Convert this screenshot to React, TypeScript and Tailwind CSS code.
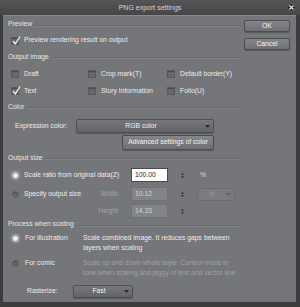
import React from 'react';

const font = { fontFamily: '"Liberation Sans", Arial, sans-serif' };

const Check = ({ checked = false }: { checked?: boolean }) => (
  <span className="relative w-[8px] h-[8px] shrink-0 bg-[#68696d] border border-[#58595d] shadow-[inset_0_1px_1px_rgba(0,0,0,0.3)]">
    {checked && (
      <svg className="absolute left-[-1px] top-[-3px]" width="11" height="11" viewBox="0 0 11 11">
        <path d="M2 6 L4.3 8.8 L9 1.5" stroke="#f4f4f4" strokeWidth="1.3" fill="none" />
      </svg>
    )}
  </span>
);

const Radio = ({ on = false }: { on?: boolean }) => (
  <span
    className={`w-[7px] h-[7px] shrink-0 rounded-full border ${
      on
        ? 'bg-[#f0f0f0] border-[#9a9b9f] shadow-[0_0_2px_1px_rgba(255,255,255,0.35)]'
        : 'bg-[#68696d] border-[#5c5d61] shadow-[inset_0_1px_1px_rgba(0,0,0,0.3)]'
    }`}
  />
);

const Header = ({ label }: { label: string }) => (
  <div className="flex items-center pl-[5px] pr-[4px] text-[#e6e6e6]">
    <span>{label}</span>
    <span className="flex-1 ml-[3px] mt-[3px] h-[2px] border-t border-[#67686c] border-b-[#828387] border-b" />
  </div>
);

const Arrow = ({ color = '#2e2e30' }: { color?: string }) => (
  <svg width="5" height="3" viewBox="0 0 5 3">
    <path d="M0 0 H5 L2.5 3 Z" fill={color} />
  </svg>
);

const Spinner = () => (
  <svg width="3" height="7" viewBox="0 0 3 7">
    <path d="M0 3 L1.5 0.5 L3 3 Z M0 4 L1.5 6.5 L3 4 Z" fill="#3c3c3e" />
  </svg>
);

const Dropdown = ({ label, w, disabled = false }: { label: string; w: string; disabled?: boolean }) => (
  <div
    className={`${w} h-full flex items-center rounded-[2px] border ${
      disabled
        ? 'border-[#6a6b6f] bg-[#7a7b7f] text-[#9c9da1]'
        : 'border-[#4f5054] bg-gradient-to-b from-[#77787c] to-[#636468] text-[#f0f0f0] shadow-[0_1px_1px_rgba(0,0,0,0.25)]'
    }`}
  >
    <span className="flex-1 text-center">{label}</span>
    <span className="pr-[3px] flex items-center">
      <Arrow color={disabled ? '#606165' : '#2a2a2c'} />
    </span>
  </div>
);

const Button = ({ label, className = '' }: { label: string; className?: string }) => (
  <div
    className={`flex items-center justify-center rounded-[2px] border border-[#4c4d51] bg-gradient-to-b from-[#85868a] to-[#6f7074] text-[#f2f2f2] shadow-[0_1px_1px_rgba(0,0,0,0.25)] ${className}`}
  >
    {label}
  </div>
);

const Field = ({ value, active = false }: { value: string; active?: boolean }) => (
  <div
    className={`w-[37px] h-[14px] flex items-center pl-[3px] border ${
      active ? 'bg-white border-[#4a4a4c] text-[#1e1e1e]' : 'bg-[#838488] border-[#707175] text-[#d2d3d6]'
    }`}
  >
    {value}
  </div>
);

export default function App() {
  return (
    <div className="w-[300px] h-[307px] bg-[#3c3c3e] flex flex-col text-[6.8px] leading-none" style={font}>
      {/* Title bar */}
      <div className="relative h-[15px] flex items-center justify-center bg-gradient-to-b from-[#555558] to-[#464649] text-[7px] text-[#d4d4d4]">
        PNG export settings
        <span className="absolute right-[4px] top-[3px] w-[9px] h-[9px] rounded-full bg-[#232325] border border-[#6a6a6c] flex items-center justify-center">
          <svg width="5" height="5" viewBox="0 0 5 5">
            <path d="M0.5 0.5 L4.5 4.5 M4.5 0.5 L0.5 4.5" stroke="#e8e8e8" strokeWidth="1.2" />
          </svg>
        </span>
      </div>

      <div className="flex flex-1 ml-[3px] mr-[4px] mb-[5px] bg-[#75767a] border-t border-[#88898d] text-[#ececec]">
        {/* Left column */}
        <div className="w-[241px] flex flex-col">
          <div className="h-[17px] flex items-center">
            <div className="w-full"><Header label="Preview" /></div>
          </div>
          <div className="h-[15px] flex items-center pl-[8px] gap-[5px]">
            <Check checked />
            <span>Preview rendering result on output</span>
          </div>

          <div className="h-[18px] flex items-center">
            <div className="w-full"><Header label="Output image" /></div>
          </div>
          <div className="h-[16px] flex items-center pl-[8px]">
            <div className="w-[77px] flex items-center gap-[5px]"><Check /><span>Draft</span></div>
            <div className="w-[79px] flex items-center gap-[5px]"><Check /><span>Crop mark(T)</span></div>
            <div className="flex items-center gap-[5px]"><Check /><span>Default border(Y)</span></div>
          </div>
          <div className="h-[18px] flex items-center pl-[8px]">
            <div className="w-[77px] flex items-center gap-[5px]"><Check checked /><span>Text</span></div>
            <div className="w-[79px] flex items-center gap-[5px]"><Check /><span>Story Information</span></div>
            <div className="flex items-center gap-[5px]"><Check /><span>Folio(U)</span></div>
          </div>

          <div className="h-[14px] flex items-center">
            <div className="w-full"><Header label="Color" /></div>
          </div>
          <div className="h-[20px] flex items-center pl-[12px] pt-[4px]">
            <span className="w-[61px]">Expression color:</span>
            <div className="h-[14px] flex">
              <Dropdown label="RGB color" w="w-[138px]" />
            </div>
          </div>
          <div className="h-[17px] flex items-center pl-[119px]">
            <Button label="Advanced settings of color" className="w-[92px] h-[15px]" />
          </div>

          <div className="h-[14px] flex items-center">
            <div className="w-full"><Header label="Output size" /></div>
          </div>
          <div className="h-[20px] flex items-center pl-[9px]">
            <div className="w-[119px] flex items-center gap-[5px]">
              <Radio on />
              <span>Scale ratio from original data(Z)</span>
            </div>
            <Field value="100.00" active />
            <div className="w-[29px] flex justify-center"><Spinner /></div>
            <span className="ml-[3px] text-[#dcdcdc]">%</span>
          </div>
          <div className="h-[18px] flex items-center pl-[9px]">
            <div className="w-[119px] flex items-center gap-[5px]">
              <Radio />
              <span>Specify output size</span>
              <span className="ml-auto mr-[13px] text-[#a3a4a8]">Width</span>
            </div>
            <Field value="10.12" />
            <div className="w-[29px] flex justify-center"><Spinner /></div>
            <div className="h-[13px] flex">
              <Dropdown label="in" w="w-[38px]" disabled />
            </div>
          </div>
          <div className="h-[16px] flex items-center pl-[9px]">
            <div className="w-[119px] flex items-center">
              <span className="ml-auto mr-[13px] text-[#a3a4a8]">Height</span>
            </div>
            <Field value="14.33" />
            <div className="w-[29px] flex justify-center"><Spinner /></div>
          </div>

          <div className="h-[11px] flex items-center">
            <div className="w-full"><Header label="Process when scaling" /></div>
          </div>
          <div className="h-[24px] flex pl-[9px] pt-[3px] leading-[10px]">
            <div className="w-[71px] h-[10px] flex items-center gap-[6px]">
              <Radio on />
              <span>For illustration</span>
            </div>
            <div>
              <div>Scale combined image. It reduces gaps between</div>
              <div>layers when scaling</div>
            </div>
          </div>
          <div className="h-[26px] flex pl-[9px] pt-[4px] leading-[10px]">
            <div className="w-[71px] h-[10px] flex items-center gap-[6px]">
              <Radio />
              <span>For comic</span>
            </div>
            <div className="text-[#a0a1a5]">
              <div>Scale up and down whole layer. Control moire in</div>
              <div>tone when scaling and jaggy of text and vector line.</div>
            </div>
          </div>
          <div className="flex-1 flex items-center pl-[24px]">
            <span className="w-[46px]">Rasterize:</span>
            <div className="h-[13px] flex">
              <Dropdown label="Fast" w="w-[60px]" />
            </div>
          </div>
        </div>

        {/* Right column */}
        <div className="w-[46px] flex flex-col pt-[4px] gap-[6px]">
          <Button label="OK" className="h-[12px]" />
          <Button label="Cancel" className="h-[12px]" />
        </div>
      </div>
    </div>
  );
}
